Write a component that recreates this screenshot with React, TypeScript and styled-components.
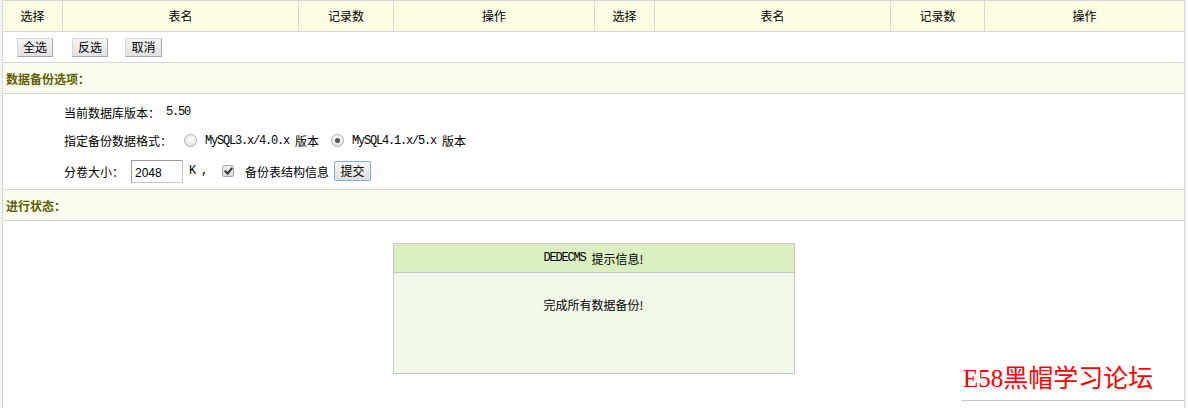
import React from "react";
import styled, { createGlobalStyle } from "styled-components";

const Global = createGlobalStyle`
  html, body { margin: 0; padding: 0; background: #f4f4f4; }
  body { font-family: "Noto Sans CJK SC", "Liberation Sans", sans-serif; font-size: 12px; color: #000; }
  #root { height: 408px; overflow: hidden; }
`;

const Page = styled.div`
  padding-left: 2px;
  width: 1183px;
  height: 408px;
  position: relative;
  background: #f4f4f4;
`;

const Frame = styled.div`
  border: 1px solid #d6d6d6;
  border-bottom: none;
  background: #fff;
  height: 408px;
  box-sizing: border-box;
`;

const HeaderRow = styled.div`
  display: grid;
  grid-template-columns: 59px 236px 95px 201px 60px 236px 94px 1fr;
  height: 30px;
  background: #fbfce2;
  border-bottom: 1px solid #d6d6d6;
`;

const HeadCell = styled.div<{ $first?: boolean }>`
  display: flex;
  align-items: center;
  justify-content: center;
  border-left: ${(p) => (p.$first ? "none" : "1px solid #d6d6d6")};
  line-height: 1;
`;

const ButtonRow = styled.div`
  display: flex;
  align-items: center;
  padding-left: 14px;
  height: 30px;
  border-bottom: 1px solid #d6d6d6;
`;

const SmallButton = styled.button<{ $gap?: number; $w?: number }>`
  font-family: "Noto Sans CJK SC", sans-serif;
  font-size: 12px;
  height: 19px;
  width: ${(p) => p.$w ?? 36}px;
  padding: 0;
  line-height: 1;
  margin: 0 ${(p) => p.$gap ?? 0}px 0 0;
  background: linear-gradient(#f4f4f4, #e2e2e2);
  border: 1px solid #d8d8d8;
  border-right-color: #a8a8a8;
  border-bottom-color: #a8a8a8;
  border-radius: 0;
  color: #000;
`;

const SectionTitle = styled.div`
  height: 30px;
  display: flex;
  align-items: center;
  padding-left: 3px;
  background: #f9fcee;
  border-bottom: 1px solid #d6d6d6;
  color: #5f5f00;
  font-weight: bold;
`;

const Options = styled.div`
  height: 96px;
  box-sizing: border-box;
  padding: 8px 0 0 61px;
  border-bottom: 1px solid #d6d6d6;
  display: flex;
  flex-direction: column;
`;

const OptRow = styled.div<{ $h: number }>`
  height: ${(p) => p.$h}px;
  display: flex;
  align-items: center;
  white-space: pre;
`;

const Label = styled.span<{ $w?: number }>`
  display: inline-block;
  width: ${(p) => (p.$w ? p.$w + "px" : "auto")};
`;

const Mono = styled.span`
  font-family: "Liberation Mono", monospace;
  font-size: 12px;
  letter-spacing: -1.2px;
  white-space: pre;
`;

const Radio = styled.input.attrs({ type: "radio" })<{ $ml?: number }>`
  appearance: none;
  width: 13px;
  height: 13px;
  margin: 0 8px 0 ${(p) => p.$ml ?? 0}px;
  border-radius: 50%;
  border: 1px solid #b4b4b4;
  background: radial-gradient(circle at 50% 35%, #fdfdfd, #dcdcdc);
  box-sizing: border-box;
  position: relative;
  &:checked::after {
    content: "";
    position: absolute;
    left: 3px;
    top: 3px;
    width: 5px;
    height: 5px;
    border-radius: 50%;
    background: #505050;
  }
`;

const Checkbox = styled.input.attrs({ type: "checkbox" })`
  appearance: none;
  width: 12px;
  height: 12px;
  margin: 0 11px 0 3px;
  border: 1px solid #a8a8a8;
  border-radius: 2px;
  background: linear-gradient(#f2f2f2, #d8d8d8);
  box-sizing: border-box;
  position: relative;
  &:checked::after {
    content: "";
    position: absolute;
    left: 3px;
    top: 0px;
    width: 3px;
    height: 6px;
    border: solid #333;
    border-width: 0 2px 2px 0;
    transform: rotate(40deg);
  }
`;

const TextBox = styled.input`
  width: 52px;
  height: 23px;
  box-sizing: border-box;
  border: 1px solid #c8c8c8;
  border-top-color: #9a9a9a;
  border-left-color: #9a9a9a;
  padding: 3px 0 0 3px;
  font-family: "Liberation Sans", sans-serif;
  font-size: 12px;
  margin: 0 6px 0 0;
`;

const SubmitButton = styled.button`
  font-family: "Noto Sans CJK SC", sans-serif;
  font-size: 12px;
  height: 20px;
  width: 37px;
  padding: 0;
  margin-left: 5px;
  line-height: 1;
  border: 1px solid #78aee8;
  border-radius: 2px;
  background: linear-gradient(#f6f6f6, #dedede);
  color: #000;
`;

const Status = styled.div`
  padding-top: 22px;
  display: flex;
  justify-content: center;
`;

const MsgBox = styled.div`
  width: 402px;
  height: 131px;
  box-sizing: border-box;
  border: 1px solid #c8c8c8;
  background: #f2f8ea;
  display: flex;
  flex-direction: column;
`;

const MsgHead = styled.div`
  height: 28px;
  background: #dbefc1;
  border-bottom: 1px solid #c8c8c8;
  display: flex;
  align-items: center;
  justify-content: center;
`;

const MsgBody = styled.div`
  padding-top: 23px;
  text-align: center;
`;

const Watermark = styled.div`
  position: absolute;
  left: 961px;
  top: 364px;
  width: 223px;
  height: 37px;
  border-bottom: 1px solid #c4c4c4;
  color: #ff0000;
  font-family: "Liberation Serif", "Noto Sans CJK SC", serif;
  font-size: 25px;
  line-height: 30px;
  padding-left: 2px;
  box-sizing: border-box;
  white-space: nowrap;
`;

const heads = ["选择", "表名", "记录数", "操作", "选择", "表名", "记录数", "操作"];

export default function App() {
  return (
    <Page>
      <Global />
      <Frame>
        <HeaderRow>
          {heads.map((h, i) => (
            <HeadCell key={i} $first={i === 0}>
              {h}
            </HeadCell>
          ))}
        </HeaderRow>
        <ButtonRow>
          <SmallButton $gap={19}>全选</SmallButton>
          <SmallButton $gap={17}>反选</SmallButton>
          <SmallButton $w={37}>取消</SmallButton>
        </ButtonRow>
        <SectionTitle>数据备份选项：</SectionTitle>
        <Options>
          <OptRow $h={20}>
            <Label $w={102}>当前数据库版本：</Label>
            <Mono>5.50</Mono>
          </OptRow>
          <OptRow $h={37}>
            <Label $w={120}>指定备份数据格式：</Label>
            <Radio name="fmt" />
            <Mono>MySQL3.x/4.0.x </Mono>
            <span>版本</span>
            <Radio name="fmt" $ml={12} defaultChecked />
            <Mono>MySQL4.1.x/5.x </Mono>
            <span>版本</span>
          </OptRow>
          <OptRow $h={24}>
            <Label $w={67}>分卷大小：</Label>
            <TextBox defaultValue="2048" />
            <Mono>K ,  </Mono>
            <Checkbox defaultChecked />
            <span>备份表结构信息</span>
            <SubmitButton>提交</SubmitButton>
          </OptRow>
        </Options>
        <SectionTitle>进行状态：</SectionTitle>
        <Status>
          <MsgBox>
            <MsgHead>
              <Mono>DEDECMS </Mono>
              <span>提示信息!</span>
            </MsgHead>
            <MsgBody>完成所有数据备份!</MsgBody>
          </MsgBox>
        </Status>
      </Frame>
      <Watermark>E58黑帽学习论坛</Watermark>
    </Page>
  );
}
